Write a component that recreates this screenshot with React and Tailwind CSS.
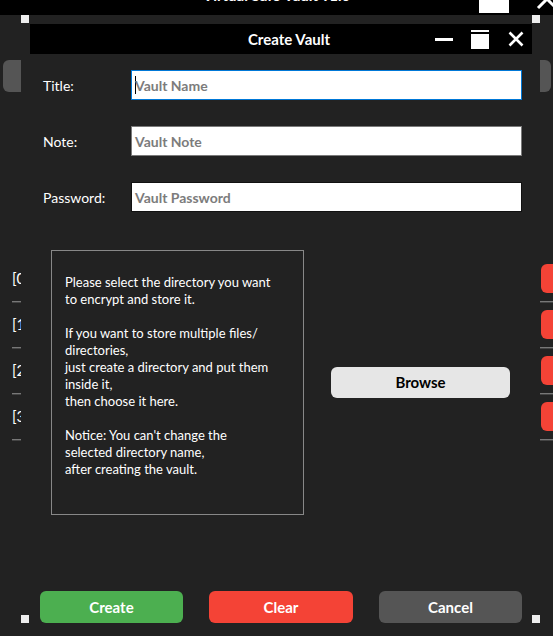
import React from "react";

const rows = ["[0]", "[1]", "[2]", "[3]"];

function MainWindow() {
  return (
    <div className="flex h-full flex-col">
      {/* main window title bar, mostly scrolled above the screen */}
      <div className="relative h-[15px] overflow-hidden bg-black">
        <div className="-mt-[14px] text-center text-[15px] font-bold leading-[18px] text-white">
          Virtual Safe Vault v1.0
        </div>
        <div className="absolute left-[479px] top-0 h-[13px] w-[30px] bg-white" />
        <svg className="absolute left-[534px] top-[-14px]" width="26" height="26" viewBox="0 0 26 26">
          <path d="M4 4 L22 22 M22 4 L4 22" stroke="white" strokeWidth="3" />
        </svg>
      </div>

      <div className="ml-[3px] mr-[2px] mt-[45px] h-[32px] rounded-[6px] bg-[#555]" />

      <div className="mt-[172px] flex flex-col">
        {rows.map((r) => (
          <div key={r} className="flex flex-col">
            <div className="flex h-[29px] items-center justify-between">
              <span className="pl-[12px] text-[15px] text-white">{r}</span>
              <div className="h-[29px] w-[60px] translate-x-[48px] rounded-[6px] bg-[#f44336]" />
            </div>
            <div className="mb-[7px] ml-[12px] mt-[8px] h-[2px] border-b border-t border-b-[#444] border-t-[#777]" />
          </div>
        ))}
      </div>
    </div>
  );
}

function Field({ label, placeholder, border, caret }) {
  return (
    <div className="flex h-[30px] items-center">
      <div className="w-[101px] pl-[13px] text-[14px] text-white">{label}</div>
      <div className={`relative flex h-[30px] w-[391px] items-center border bg-white pl-[3px] ${border}`}>
        {caret && <span className="mr-[-1px] h-[18px] w-px bg-black" />}
        <span className="text-[14px] font-bold text-[#7c7c7c]">{placeholder}</span>
      </div>
    </div>
  );
}

function CreateVaultDialog() {
  return (
    <div className="absolute left-[21px] top-[15px] h-[608px] w-[519px] bg-[#222]">
      {/* resize handles */}
      <div className="absolute left-0 top-0 h-[8px] w-[8px] bg-[#eeeeee]" />
      <div className="absolute right-0 top-0 h-[8px] w-[8px] bg-[#eeeeee]" />
      <div className="absolute bottom-0 left-0 h-[8px] w-[8px] bg-[#eeeeee]" />
      <div className="absolute bottom-0 right-0 h-[8px] w-[8px] bg-[#eeeeee]" />

      <div className="flex h-full flex-col pl-[9px] pr-[8px] pt-[9px]">
        {/* dialog title bar */}
        <div className="relative flex h-[30px] items-center justify-center bg-black pl-[16px]">
          <span className="text-[15px] font-bold text-white">Create Vault</span>
          <div className="absolute right-0 top-0 flex h-[30px] items-center">
            <div className="h-[3px] w-[18px] bg-white" />
            <div className="ml-[18px] flex w-[18px] flex-col">
              <div className="h-[2px] bg-white" />
              <div className="mt-[2px] h-[15px] bg-white" />
            </div>
            <svg className="ml-[19px] mr-[8px]" width="16" height="16" viewBox="0 0 16 16">
              <path d="M1.5 1.5 L14.5 14.5 M14.5 1.5 L1.5 14.5" stroke="white" strokeWidth="2.6" />
            </svg>
          </div>
        </div>

        {/* form fields */}
        <div className="mt-[16px] flex flex-col gap-[26px]">
          <Field label="Title:" placeholder="Vault Name" border="border-[#0078d7]" caret />
          <Field label="Note:" placeholder="Vault Note" border="border-[#7a7a7a]" />
          <Field label="Password:" placeholder="Vault Password" border="border-[#111]" />
        </div>

        {/* directory selection */}
        <div className="mt-[38px] flex items-center">
          <div className="ml-[21px] h-[265px] w-[253px] border border-[#888] pl-[13px] pt-[23px]">
            <p className="whitespace-pre-line text-[13px] leading-[17px] text-white">
              {"Please select the directory you want\nto encrypt and store it.\n\nIf you want to store multiple files/\ndirectories,\njust create a directory and put them\ninside it,\nthen choose it here.\n\nNotice: You can't change the\nselected directory name,\nafter creating the vault."}
            </p>
          </div>
          <button className="ml-[27px] h-[31px] w-[179px] rounded-[6px] bg-[#e6e6e6] text-[15px] font-bold text-black">
            Browse
          </button>
        </div>

        <div className="flex-1" />

        {/* actions */}
        <div className="flex gap-[26px] pl-[10px]">
          <button className="h-[32px] w-[143px] rounded-[6px] bg-[#4caf50] text-[15px] font-bold text-white">
            Create
          </button>
          <button className="h-[32px] w-[144px] rounded-[6px] bg-[#f44336] text-[15px] font-bold text-white">
            Clear
          </button>
          <button className="h-[32px] w-[143px] rounded-[6px] bg-[#555] text-[15px] font-bold text-white">
            Cancel
          </button>
        </div>
      </div>
    </div>
  );
}

export default function App() {
  return (
    <div className="relative h-[636px] w-[553px] overflow-hidden bg-[#222] font-['Lato',sans-serif]">
      <MainWindow />
      <CreateVaultDialog />
    </div>
  );
}
